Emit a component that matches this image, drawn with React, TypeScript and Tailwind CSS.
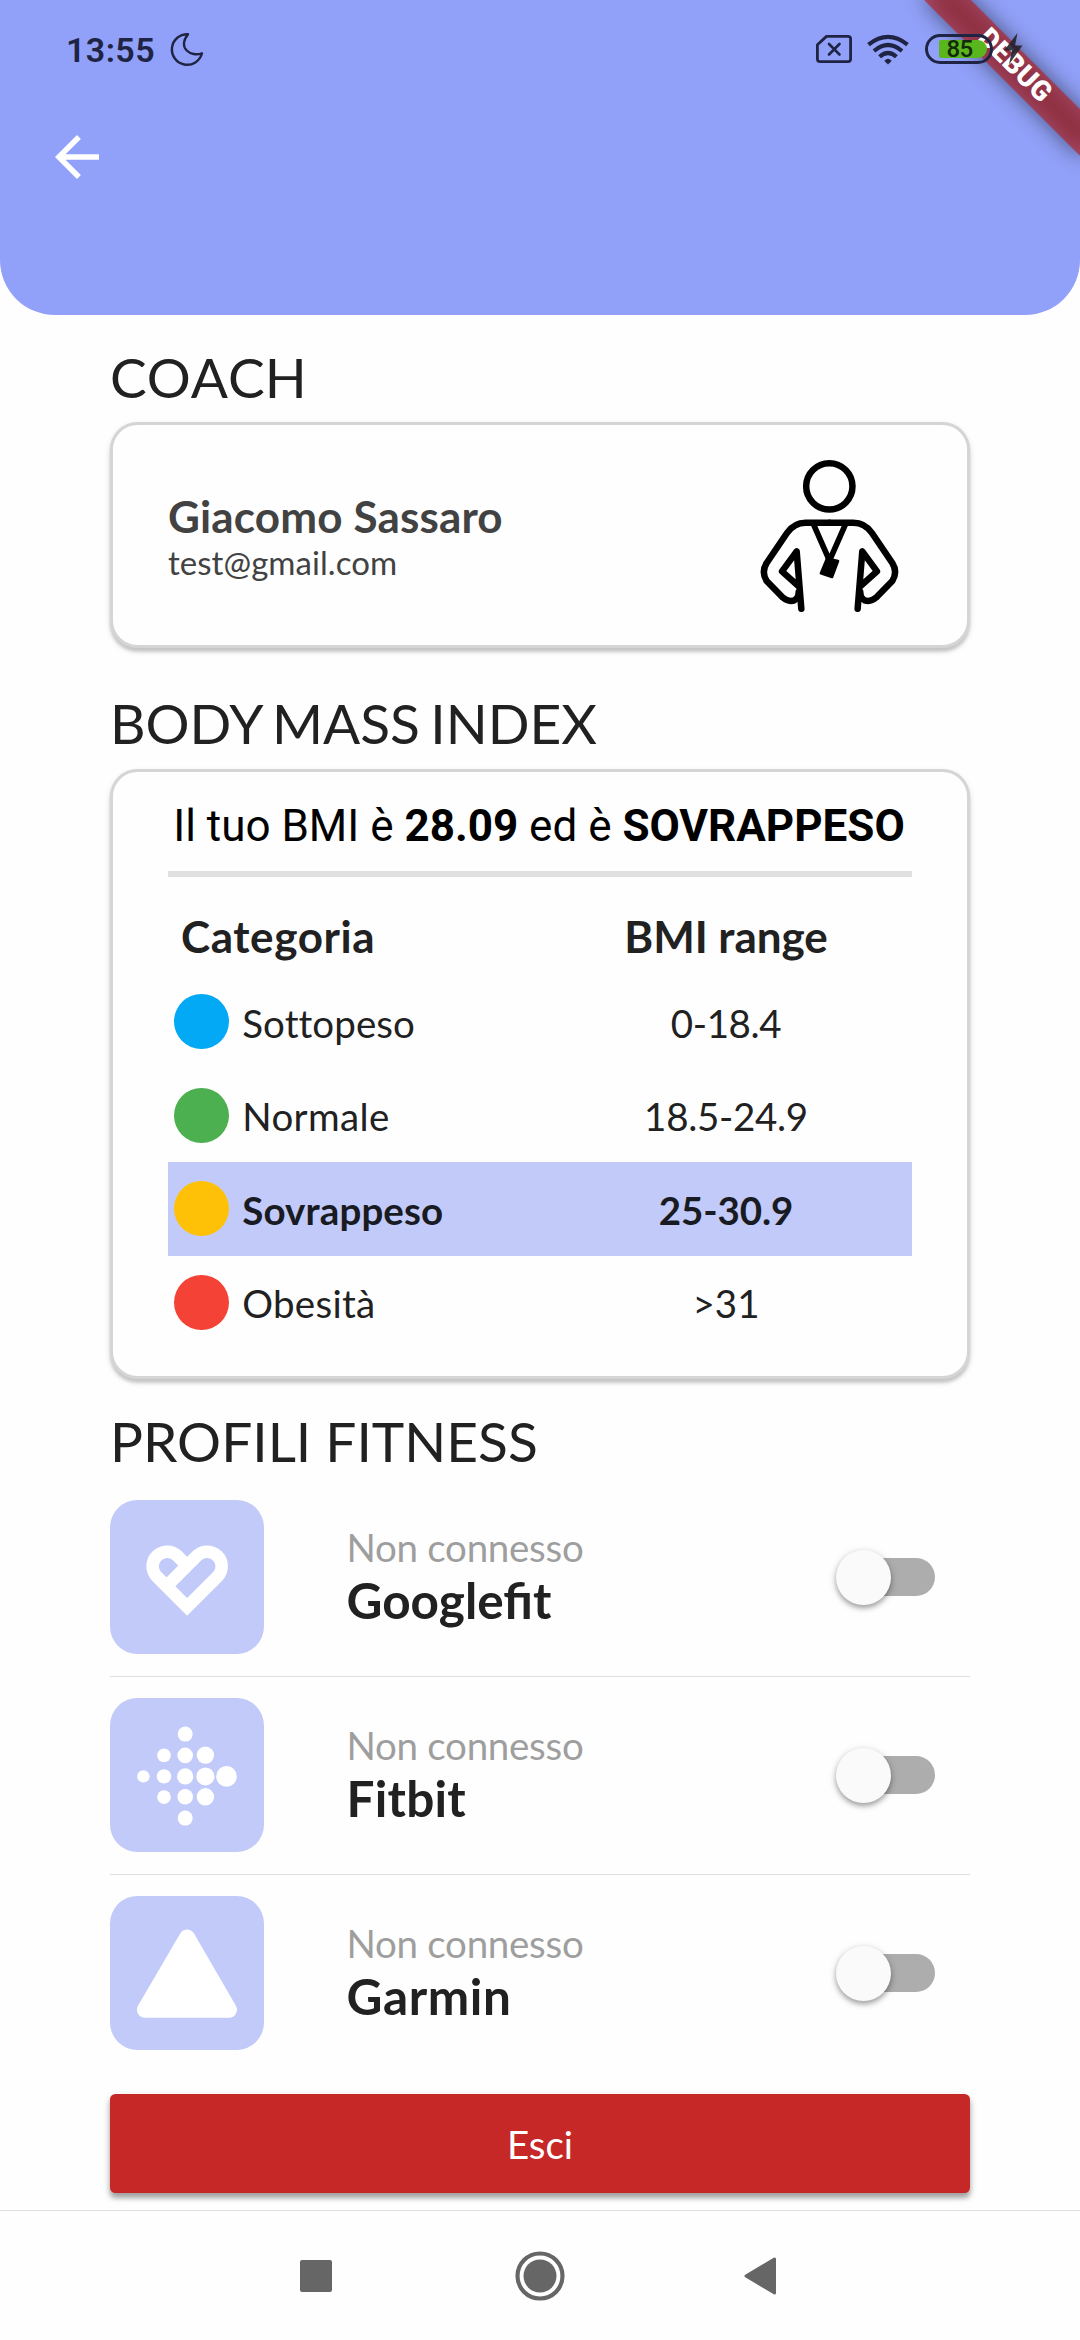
import type { ReactNode } from "react";

const INK = "#1f2444";

function StatusBar() {
  return (
    <div className="absolute inset-x-0 top-0 z-20 flex h-[98px] items-center pl-[66px] pr-[57px]">
      <span className="translate-y-px font-[Roboto] text-[34px] font-semibold leading-[40px] tracking-[0.4px] text-[#1f2444]">13:55</span>
      <svg className="ml-[15px]" width="34" height="36" viewBox="0 0 34 36" fill="none" stroke={INK} strokeWidth="2.4" strokeLinejoin="round">
        <path d="M18 3.200A15.300 15.300 0 1 0 32 22.300C21 26.500 7 17 18 3.200Z" />
      </svg>
      <div className="ml-auto flex items-center">
        <svg width="36" height="28" viewBox="0 0 36 28" fill="none" stroke={INK} strokeWidth="2.8" strokeLinejoin="round">
          <path d="M10.500 1.400H32a2.600 2.600 0 0 1 2.600 2.600V24a2.600 2.600 0 0 1-2.600 2.600H4A2.600 2.600 0 0 1 1.400 24V9.800Z" />
          <path d="M13 9l10.500 10.500M23.500 9L13 19.500" strokeLinecap="round" strokeWidth="2.600" />
        </svg>
        <svg className="ml-[15px]" width="42" height="31" viewBox="0 0 42 31" fill="none" stroke={INK} strokeWidth="4.2">
          <path d="M1.500 10.600Q21-4.800 40.500 10.600" />
          <path d="M7 17Q21 5 35 17" />
          <path d="M12.600 22.800Q21 15.200 29.400 22.800" />
          <path d="M17.300 27Q21 22.600 24.700 27L21 30.400Z" fill={INK} stroke="none" />
        </svg>
        <div className="ml-[16px] flex h-[30px] w-[68px] items-center rounded-full border-[3px] border-[#1f2444] pl-[11px]">
          <div className="flex h-[18px] w-[48px] items-center justify-center rounded-l-[2px] rounded-r-[9px] bg-[#5ab61d]">
            <span className="-ml-[7px] font-[Roboto] text-[24px] font-medium leading-none tracking-[-0.7px] text-[#12290a]">85</span>
          </div>
        </div>
        <svg className="ml-[11px]" width="19" height="32" viewBox="0 0 19 32" fill="#24222f">
          <path d="M13.500 0L0 17.500H8L5 31.500L18.500 12.500H11Z" opacity="0.9" />
        </svg>
      </div>
    </div>
  );
}

function DebugRibbon() {
  return (
    <div className="absolute right-0 top-0 z-10 h-[240px] w-[240px] overflow-hidden">
      <div className="absolute left-[64.300px] top-[49.600px] h-[33px] w-[220px] rotate-45">
        <div className="absolute inset-0 bg-black/50 blur-[10.900px]" />
        <div className="absolute inset-0 flex items-center justify-center bg-[#b71c1c]/63">
          <span className="-translate-y-[2px] font-[Roboto] text-[28px] font-black leading-none tracking-[0.3px] text-white">DEBUG</span>
        </div>
      </div>
    </div>
  );
}

function Title({ children, className = "" }: { children: ReactNode; className?: string }) {
  return <h2 className={"translate-y-px text-[55px] leading-[66px] text-[#212121] " + className}>{children}</h2>;
}

function Card({ children, className }: { children: ReactNode; className: string }) {
  return (
    <section
      className={
        "mt-[13.750px] rounded-[27.500px] border-[3px] border-[#d5d5d5] bg-[#fefefe] shadow-[0_4px_3px_rgba(0,0,0,0.14),0_3px_6px_rgba(0,0,0,0.12)] " +
        className
      }
    >
      {children}
    </section>
  );
}

function CoachIcon() {
  const side = (
    <>
      <path d="M329 366H258Q223 366 202 397L141 487Q124 514 141 541L190 591Q206 605 224 599Q237 593 237 575" />
      <path d="M238 558L187 512L231 452L245 624" />
    </>
  );
  return (
    <svg className="mt-[28.500px] self-start" width="153.300" height="160" viewBox="100 160 460 480" fill="none" stroke="#000" strokeWidth="19.500" strokeLinecap="round" strokeLinejoin="round">
      <circle cx="329" cy="257" r="69.500" />
      {side}
      <g transform="translate(659 0) scale(-1 1)">{side}</g>
      <path d="M282 372L329.500 480L377 372" strokeWidth="17" />
      <path d="M322 474L355 481L337 529L304 518Z" fill="#000" strokeWidth="8" />
    </svg>
  );
}

const CATEGORIES = [
  { name: "Sottopeso", range: "0-18.4", dot: "bg-[#03a9f4]", active: false, nameFit: "tracking-[0.08px]", rangeFit: "tracking-[-0.4px]" },
  { name: "Normale", range: "18.5-24.9", dot: "bg-[#4caf50]", active: false, nameFit: "tracking-[0.35px]", rangeFit: "tracking-[-0.3px]" },
  { name: "Sovrappeso", range: "25-30.9", dot: "bg-[#ffc107]", active: true, nameFit: "tracking-[0.12px]", rangeFit: "tracking-[-0.1px]" },
  { name: "Obesità", range: ">31", dot: "bg-[#f44336]", active: false, nameFit: "tracking-[0.3px]", rangeFit: "tracking-normal" },
];

function GoogleFitIcon() {
  return (
    <svg width="154" height="154" viewBox="0 0 154 154" fill="none" stroke="#fff" strokeWidth="12.500">
      <path d="M77.100 65.600L66.800 55.300A14.600 14.600 0 0 0 46.200 75.900L77.100 107L108.100 75.900A14.600 14.600 0 0 0 87.500 55.300L56.500 86.200" />
    </svg>
  );
}

const FITBIT_DOTS = [
  [33.4, 78.4, 6.2],
  [54, 57.4, 6.8], [54, 78.4, 7.2], [54, 99.1, 6.8],
  [75.2, 36.1, 7.5], [75.2, 57.4, 7.8], [75.2, 78.4, 8.1], [75.2, 98.8, 7.8], [75.2, 120.1, 7.5],
  [95.4, 57.1, 8.7], [95.4, 78.4, 9], [95.4, 98.8, 8.7],
  [116.5, 78.4, 10.3],
];

function FitbitIcon() {
  return (
    <svg width="154" height="154" viewBox="0 0 154 154" fill="#fff">
      {FITBIT_DOTS.map(([x, y, r]) => (
        <circle key={x + "-" + y} cx={x} cy={y} r={r} />
      ))}
    </svg>
  );
}

function GarminIcon() {
  return (
    <svg width="154" height="154" viewBox="0 0 154 154" fill="#fff" stroke="#fff" strokeWidth="16" strokeLinejoin="round">
      <path d="M77.100 41.600L119 113.800H34.900Z" />
    </svg>
  );
}

function Switch() {
  return (
    <button className="relative ml-auto mr-[35.500px] flex h-[55px] w-[99px] items-center" role="switch" aria-checked="false">
      <span className="ml-[8px] h-[38.500px] w-[91px] rounded-full bg-[#adadad]" />
      <span className="absolute left-0 top-0 h-[55px] w-[55px] rounded-full bg-[#fafafa] shadow-[0_3px_5px_rgba(0,0,0,0.28),0_2px_9px_rgba(0,0,0,0.16)]" />
    </button>
  );
}

function Profile({ name, icon, fit }: { name: string; icon: ReactNode; fit: string }) {
  return (
    <div className="flex h-[154px] items-center">
      <div className="h-[154px] w-[154px] overflow-hidden rounded-[27.500px] bg-[#c2caf9]">{icon}</div>
      <div className="ml-[82.500px]">
        <p className="text-[38.500px] leading-[46.200px] tracking-[-0.28px] text-[#9e9e9e]">Non connesso</p>
        <p className={"translate-y-px text-[49.500px] font-bold leading-[59.400px] text-[#212121] " + fit}>{name}</p>
      </div>
      <Switch />
    </div>
  );
}

function Separator() {
  return <div className="my-[21.500px] h-px bg-[#e0e0e0]" />;
}

export default function App() {
  return (
    <div className="relative flex h-[2340px] w-[1080px] flex-col overflow-hidden bg-[#fefefe] font-['Lato',sans-serif]">
      <StatusBar />
      <DebugRibbon />
      <header className="h-[315px] shrink-0 rounded-b-[55px] bg-[#91a0f8] pl-[44px] pt-[124px]">
        <svg width="66" height="66" viewBox="0 0 24 24" fill="#fff">
          <path d="M20 11H7.830l5.590-5.590L12 4l-8 8 8 8 1.410-1.410L7.830 13H20v-2z" />
        </svg>
      </header>

      <main className="flex h-[1895px] shrink-0 flex-col px-[110px] pt-[27.500px]">
        <Title className="[font-kerning:none]">COACH</Title>
        <Card className="flex h-[226px] items-center justify-between pl-[55px] pr-[60.250px]">
          <div className="translate-y-px text-[#424242]">
            <p className="text-[44px] font-bold leading-[52.800px] tracking-[0.15px]">Giacomo Sassaro</p>
            <p className="text-[33px] leading-[39.600px] tracking-[0.05px]">test@gmail.com</p>
          </div>
          <CoachIcon />
        </Card>

        <div className="mt-[40.750px]">
          <Title className="[word-spacing:-3.600px]">BODY MASS INDEX</Title>
        </div>
        <Card className="h-[610.250px] px-[55px]">
          <p className="mt-[27.250px] translate-y-px pr-[2px] text-center font-[Roboto] text-[44px] leading-[52px] text-black">
            Il tuo BMI è <b>28.09</b> ed è <b>SOVRAPPESO</b>
          </p>
          <div className="mt-[20px] h-[5.500px] bg-[#e0e0e0]" />
          <div className="mt-[20px] grid h-[78.500px] grid-cols-2 items-center text-[44px] font-bold leading-[52.800px] text-[#212121]">
            <span className="translate-y-px pl-[13px] tracking-[0.6px]">Categoria</span>
            <span className="translate-y-px text-center tracking-[-0.05px]">BMI range</span>
          </div>
          {CATEGORIES.map((c) => (
            <div
              key={c.name}
              className={
                "grid h-[93.500px] grid-cols-2 items-center text-[38.500px] leading-[46.200px] " +
                (c.active ? "bg-[#c2caf9] font-bold text-[#191b23]" : "text-[#212121]")
              }
            >
              <span className="flex items-center gap-[13.750px] pl-[5.500px]">
                <i className={"h-[55px] w-[55px] rounded-full " + c.dot} />
                <span className={"translate-y-px [font-variant-ligatures:none] " + c.nameFit}>{c.name}</span>
              </span>
              <span className={"translate-y-px text-center " + c.rangeFit}>{c.range}</span>
            </div>
          ))}
        </Card>

        <div className="mb-[27.500px] mt-[27.500px]">
          <Title>PROFILI FITNESS</Title>
        </div>
        <Profile name="Googlefit" fit="tracking-normal" icon={<GoogleFitIcon />} />
        <Separator />
        <Profile name="Fitbit" fit="tracking-[0.25px]" icon={<FitbitIcon />} />
        <Separator />
        <Profile name="Garmin" fit="tracking-[0.6px]" icon={<GarminIcon />} />

        <button className="mt-[44px] h-[99px] shrink-0 rounded-[5.500px] bg-[#c62828] text-[38.500px] leading-[46.200px] text-white shadow-[0_5px_5px_rgba(0,0,0,0.28),0_3px_9px_rgba(0,0,0,0.16)]">
          <span className="inline-block translate-y-px">Esci</span>
        </button>
      </main>

      <nav className="relative flex h-[130px] items-center border-t border-[#e0e0e0] bg-[#fefefe] pl-[300px]">
        <div className="h-[32px] w-[32px] rounded-[2px] bg-[#666666]" />
        <svg className="ml-[183px]" width="50" height="50" viewBox="0 0 50 50">
          <circle cx="25" cy="25" r="22.500" fill="none" stroke="#666" strokeWidth="4.200" />
          <circle cx="25" cy="25" r="16.500" fill="#666" />
        </svg>
        <svg className="ml-[179px]" width="33" height="38" viewBox="0 0 33 38" fill="#666" stroke="#666" strokeWidth="3" strokeLinejoin="round">
          <path d="M2 19L30.500 2V36Z" />
        </svg>
      </nav>
    </div>
  );
}
